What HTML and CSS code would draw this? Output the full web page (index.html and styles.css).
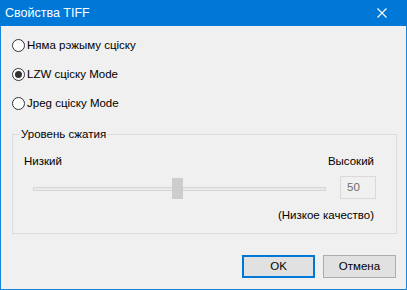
FILE: index.html
```html
<!DOCTYPE html>
<html lang="ru">
<head>
  <meta charset="UTF-8">
  <title>Свойства TIFF</title>
  <link rel="stylesheet" href="styles.css">
</head>
<body>
  <div class="window">
    <div class="titlebar">
      <span class="title">Свойства TIFF</span>
      <svg class="close" width="10" height="10" viewBox="0 0 10 10">
        <path d="M0.5 0.5 L9.5 9.5 M9.5 0.5 L0.5 9.5" stroke="white" stroke-width="1.1" fill="none"/>
      </svg>
    </div>
    <div class="content">
      <div class="options">
        <div class="option"><span class="radio"></span>Няма рэжыму сціску</div>
        <div class="option"><span class="radio checked"></span>LZW сціску Mode</div>
        <div class="option"><span class="radio"></span>Jpeg сціску Mode</div>
      </div>
      <fieldset class="group">
        <legend>Уровень сжатия</legend>
        <div class="labels">
          <span>Низкий</span>
          <span>Высокий</span>
        </div>
        <div class="slider-row">
          <div class="track"><div class="thumb"></div></div>
          <div class="valuebox">50</div>
        </div>
        <div class="caption">(Низкое качество)</div>
      </fieldset>
      <div class="buttons">
        <div class="btn default">OK</div>
        <div class="btn">Отмена</div>
      </div>
    </div>
  </div>
</body>
</html>
```

FILE: styles.css
```css
body {
  margin: 0;
  font-family: "Liberation Sans", "Noto Sans", sans-serif;
  font-size: 11.5px;
  color: #000;
}
.window {
  width: 407px;
  height: 290px;
  box-sizing: border-box;
  border: 1px solid #1883d7;
  border-top: none;
  background-color: #f0f0f0;
  display: flex;
  flex-direction: column;
}
.titlebar {
  height: 26px;
  margin: 0 -1px;
  background-color: #0078d7;
  color: white;
  display: flex;
  align-items: center;
  justify-content: space-between;
  padding: 0 20px 0 5px;
  box-sizing: border-box;
}
.title {
  font-size: 12.5px;
  line-height: 16px;
}
.content {
  padding: 0 9px 0 11px;
  display: flex;
  flex-direction: column;
}
.options {
  padding-top: 11px;
  display: flex;
  flex-direction: column;
  gap: 13px;
}
.option {
  height: 16px;
  line-height: 16px;
  display: flex;
  align-items: center;
  gap: 2px;
}
.radio {
  width: 13px;
  height: 13px;
  box-sizing: border-box;
  border: 1px solid #333;
  border-radius: 50%;
  background-color: white;
  display: flex;
  align-items: center;
  justify-content: center;
}
.radio.checked::after {
  content: '';
  width: 7px;
  height: 7px;
  border-radius: 50%;
  background-color: #333;
}
.group {
  margin: 15px 0 0 0;
  padding: 0 22px 10px 11px;
  border: 1px solid #dcdcdc;
  min-width: 0;
}
.group legend {
  margin-left: -4px;
  padding: 0 1px;
  line-height: 16px;
}
.labels {
  margin-top: 11px;
  line-height: 16px;
  display: flex;
  justify-content: space-between;
}
.slider-row {
  margin-top: 7px;
  margin-right: -2px;
  height: 23px;
  display: flex;
}
.track {
  position: relative;
  flex: 1;
  height: 4px;
  margin: 11px 14px 0 9px;
  box-sizing: border-box;
  border: 1px solid #d6d6d6;
  background-color: #e7eaea;
}
.thumb {
  position: absolute;
  left: 138px;
  top: -10px;
  width: 11px;
  height: 21px;
  background-color: #cdcdcd;
}
.valuebox {
  width: 36px;
  height: 23px;
  box-sizing: border-box;
  border: 1px solid #d9d9d9;
  color: #6d6d6d;
  line-height: 21px;
  padding-left: 6px;
}
.caption {
  margin-top: 8px;
  line-height: 16px;
  text-align: right;
}
.buttons {
  margin-top: 21px;
  display: flex;
  justify-content: flex-end;
  gap: 8px;
  padding-right: 1px;
}
.btn {
  width: 73px;
  height: 23px;
  box-sizing: border-box;
  border: 1px solid #adadad;
  background-color: #e1e1e1;
  text-align: center;
  line-height: 21px;
}
.btn.default {
  border: 2px solid #0078d7;
  line-height: 19px;
}
```
